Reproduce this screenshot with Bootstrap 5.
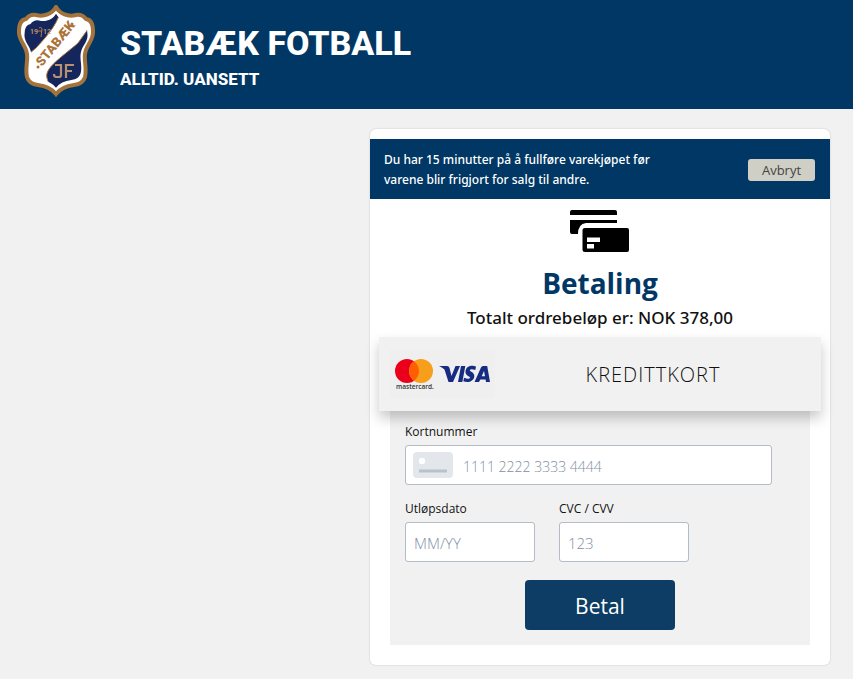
<!DOCTYPE html>
<html lang="no">
<head>
<meta charset="utf-8">
<meta name="viewport" content="width=device-width, initial-scale=1">
<title>Betaling – Stabæk Fotball</title>
<link href="https://cdn.jsdelivr.net/npm/bootstrap@5.3.0/dist/css/bootstrap.min.css" rel="stylesheet">
<style>
body { background: #f1f1f1; font-family: "Open Sans", "Noto Sans", sans-serif; color: #111; }
.site-head { background: #003764; padding: 5px 16px 11px; }
.brand-link { gap: 24px; color: #fff; font-family: Roboto, sans-serif; font-weight: 800; }
.brand-title { font-size: 34px; line-height: 40px; padding-top: 14px; }
.brand-tag { font-size: 17px; line-height: 32px; }
.pay-wrap { padding: 20px 23px 14px; }
.pay-card { max-width: 460px; padding: 10px 0 20px; border-radius: 6px; box-shadow: 0 0 2px rgba(0,0,0,.2); }
.timer { background: #003764; color: #fff; padding: 11px 15px 9px 14px; font-family: "Noto Sans", sans-serif; font-size: 12px; line-height: 20px; font-weight: 500; }
.timer p { max-width: 290px; }
.cancel { background: #d0cfc6; color: #444; border: 0; border-radius: 3px; width: 67px; font-family: "Open Sans", sans-serif; font-size: 13px; line-height: 22px; padding: 0; }
.pay-title { color: #003764; font-size: 28px; line-height: 40px; font-weight: 700; }
.total { font-family: "Noto Sans", sans-serif; font-size: 17px; line-height: 28px; font-weight: 500; padding-top: 1px; }
.method { margin: 5px 9px 0; padding: 13px 10px; background: #f1f1f1; color: #111; border: 0; box-shadow: 0 7px 12px rgba(0,0,0,.22); }
.method-logo { background: #efefef; }
.method-name { font-size: 20px; line-height: 28px; font-weight: 300; letter-spacing: 1px; padding: 2px 24px 0 0; }
.pay-form { margin: 0 20px; padding: 11px 38px 15px 15px; background: #f1f1f1; }
.pay-form label { font-size: 12px; line-height: 20px; margin-bottom: 3px; }
.pay-form .form-control { height: 40px; border: 1px solid #b4bcc6; border-radius: 3px; padding: 5px 8px 3px; font-size: 15px; font-weight: 300; }
.pay-form .form-control::placeholder { color: #8290a5; }
.pay-form .card-no { padding-left: 57px; font-size: 14px; }
.card-mark { left: 8px; top: 7px; }
.short-fields { gap: 24px; margin-top: 14px; }
.short-fields > div { flex: 0 1 130px; }
.pay-btn { width: 150px; background: #0d3d64; color: #fff; border: 0; border-radius: 4px; font-size: 21px; line-height: 30px; padding: 11px 10px 9px; }
.pay-actions { margin: 18px -23px 0 0; }
</style>
<script src="https://cdn.jsdelivr.net/npm/bootstrap@5.3.0/dist/js/bootstrap.bundle.min.js"></script>
</head>
<body>
<header class="site-head d-flex">
  <a href="#" class="brand-link d-flex align-items-center text-decoration-none">
    <svg width="80" height="93" viewBox="0 0 80 93" aria-hidden="true">
      <defs><path id="shield" d="M40 2C36 9 28 12 20 10Q14 9 10 14Q3 15 3 26C2 35 10 40 11 49C12 57 9 63 11 72Q13 79 22 80C30 81 36 84 40 89C44 84 50 81 58 80Q67 79 69 72C71 63 68 57 69 49C70 40 78 35 77 26Q77 15 70 14Q66 9 60 10C52 12 44 9 40 2Z"/><clipPath id="inner"><use href="#shield" transform="translate(6 7) scale(.85)"/></clipPath></defs>
      <use href="#shield" fill="#fff" stroke="#a4733c" stroke-width="4"/>
      <g clip-path="url(#inner)">
        <path fill="#15265c" stroke="#b27a41" d="M0 0H46C43 17 34 28 20 43L0 60Z"/>
        <path fill="#15265c" stroke="#b27a41" d="M80 13L62 38C46 52 28 63 31 73C32 79 37 83 40 93H80Z"/>
      </g>
      <g font-family="Roboto,sans-serif" font-size="7" font-weight="600" fill="#c09a78"><text x="14" y="29">19</text><text x="27" y="29">12</text></g>
      <path d="M23 23q2-2 3 1l-1 8M22 26h4" fill="none" stroke="#b27a41"/>
      <text transform="translate(26 62) rotate(-51)" font-family="Roboto,sans-serif" font-size="13" font-weight="900" fill="#ad723a">STABÆK</text>
      <circle cx="22" cy="62" r="1.5" fill="#ad723a"/><circle cx="56" cy="19" r="1.5" fill="#ad723a"/>
      <path d="M39 60h6v10q0 2-2 2h-3q-2 0-2-3M50 73V60h8M50 66h6" fill="none" stroke="#b99070" stroke-width="2.2"/>
    </svg>
    <span class="d-flex flex-column">
      <span class="brand-title">STABÆK FOTBALL</span>
      <span class="brand-tag">ALLTID. UANSETT</span>
    </span>
  </a>
</header>
<main class="pay-wrap d-flex justify-content-end">
  <section class="pay-card bg-white w-100">
    <div class="timer d-flex align-items-center justify-content-between gap-3">
      <p class="mb-0">Du har 15 minutter på å fullføre varekjøpet før varene blir frigjort for salg til andre.</p>
      <button type="button" class="cancel flex-shrink-0">Avbryt</button>
    </div>
    <div class="text-center">
      <svg class="d-block mx-auto mt-2" width="60" height="48" viewBox="0 0 60 48" aria-hidden="true">
        <path d="M0 8V5Q0 3 2 3H45Q47 3 47 5V8ZM0 13H47V16H16Q8 17 8 27H2Q0 27 0 25Z"/>
        <path fill-rule="evenodd" d="M15 21H57Q59 21 59 23V43Q59 45 57 45H15Q12.500 45 12.500 43V23Q12.500 21 15 21ZM17 30.500V35H30V30.500ZM17 37V41.500H24V37Z"/>
      </svg>
      <h1 class="pay-title mb-0 mt-2">Betaling</h1>
      <p class="total mb-0">Totalt ordrebeløp er: NOK 378,00</p>
    </div>
    <div class="method position-relative d-flex align-items-center">
      <svg class="method-logo flex-shrink-0" width="106" height="48" viewBox="0 0 106 48" role="img" aria-label="Mastercard og Visa">
        <circle cx="18" cy="21" r="12" fill="#eb001b"/><circle cx="32" cy="21" r="12" fill="#f79e1b"/>
        <path d="M25 11.300a12 12 0 0 1 0 19.400a12 12 0 0 1 0-19.400Z" fill="#ff5f00"/>
        <text x="7" y="39" font-family="Open Sans,sans-serif" font-size="6.500" font-weight="600" fill="#333">mastercard.</text>
        <g fill="#152c82" transform="translate(-1 1)"><path d="M51 15h8q2 0 2.500 2l2 8 4-10h4.500l-7 16h-4.500l-4-12.500Q54 16 51 15Z"/><path d="M73 15h4.300l-3 16H70Z"/><path d="M88 15.500l-.7 3.500q-5-1.500-5.500.3c0 1.500 5 2 4.500 6.200-.6 5-6 6.500-11 4.800l.7-3.600c3 1.300 5.700 1.200 6 0 .4-1.600-5-2-4.500-6.300.6-5.200 6-6.500 10.500-4.900Z"/><path fill-rule="evenodd" d="M95 15h4.200l2.800 16h-4l-.4-2.500h-5.300L91 31h-4.500l6.500-14.500Q93.600 15 95 15Zm1 5-2.300 5.300H97Z"/></g>
      </svg>
      <span class="method-name flex-fill text-center ms-4">KREDITTKORT</span>
    </div>
    <form class="pay-form">
      <div>
        <label class="d-block" for="card-number">Kortnummer</label>
        <div class="position-relative">
          <input class="form-control card-no" id="card-number" type="text" inputmode="numeric" placeholder="1111 2222 3333 4444">
          <svg class="card-mark position-absolute" width="40" height="26" viewBox="0 0 40 26" aria-hidden="true"><rect width="40" height="26" rx="4" fill="#e3e7ec"/><rect x="6" y="6" width="6" height="6" rx="2" fill="#fff"/><path d="M6 17.500h28v3H6z" fill="#b8c2cc"/></svg>
        </div>
      </div>
      <div class="short-fields d-flex">
        <div><label class="d-block" for="expiry">Utløpsdato</label><input class="form-control" id="expiry" type="text" placeholder="MM/YY"></div>
        <div><label class="d-block" for="cvc">CVC / CVV</label><input class="form-control" id="cvc" type="text" placeholder="123"></div>
      </div>
      <div class="pay-actions text-center"><button type="submit" class="pay-btn">Betal</button></div>
    </form>
  </section>
</main>
</body>
</html>
